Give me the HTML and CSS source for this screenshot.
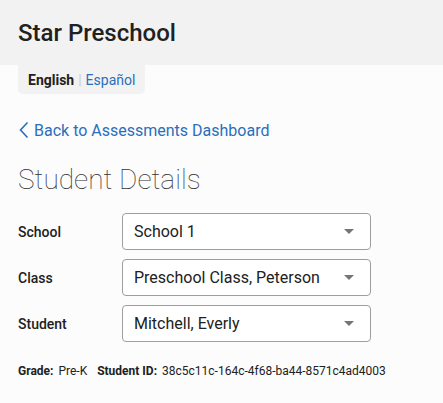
FILE: index.html
```html
<!DOCTYPE html>
<html lang="en">
<head>
<meta charset="utf-8">
<title>Star Preschool</title>
<link rel="stylesheet" href="styles.css">
</head>
<body>
<header class="header">
  <h1 class="title">Star Preschool</h1>
</header>
<div class="lang-wrap">
  <div class="lang">
    <span class="lang-active">English</span><span class="lang-sep">|</span><a class="lang-link" href="#">Español</a>
  </div>
</div>
<main class="main">
  <a class="back" href="#">
    <svg class="chev" width="12" height="18" viewBox="0 0 12 18"><path d="M9.5 1.5 L2.5 9 L9.5 16.5" fill="none" stroke="#2a6ebb" stroke-width="1.6"/></svg>
    <span>Back to Assessments Dashboard</span>
  </a>
  <h2 class="heading">Student Details</h2>
  <div class="form">
    <div class="row">
      <label class="label">School</label>
      <div class="select"><span>School 1</span><span class="arrow"></span></div>
    </div>
    <div class="row">
      <label class="label">Class</label>
      <div class="select"><span>Preschool Class, Peterson</span><span class="arrow"></span></div>
    </div>
    <div class="row">
      <label class="label">Student</label>
      <div class="select"><span>Mitchell, Everly</span><span class="arrow"></span></div>
    </div>
  </div>
  <div class="meta">
    <b class="meta-key">Grade:</b><span class="meta-val">Pre-K</span>
    <b class="meta-key">Student ID:</b><span class="meta-val">38c5c11c-164c-4f68-ba44-8571c4ad4003</span>
  </div>
</main>
</body>
</html>
```
FILE: styles.css
```css
html, body {
  margin: 0;
  padding: 0;
}
body {
  background: #fcfcfc;
  font-family: Roboto, "Liberation Sans", sans-serif;
  color: #212121;
}
.header {
  background: #f2f2f2;
  height: 65px;
  display: flex;
  align-items: center;
  padding: 0 18px;
}
.title {
  margin: 0;
  font-size: 24px;
  font-weight: 500;
  color: #212121;
}
.lang-wrap {
  padding: 0 18px;
  display: flex;
}
.lang {
  background: #f2f2f2;
  border-radius: 0 0 5px 5px;
  height: 29px;
  padding: 0 10px;
  display: flex;
  align-items: center;
  font-size: 14px;
}
.lang-active {
  font-weight: 700;
  color: #212121;
}
.lang-sep {
  color: #c8d0da;
  margin: 0 4px;
}
.lang-link {
  color: #2a6ebb;
  text-decoration: none;
}
.main {
  padding: 0 18px;
}
.back {
  display: flex;
  align-items: center;
  gap: 4px;
  margin-top: 26px;
  color: #2a6ebb;
  text-decoration: none;
  font-size: 16px;
  height: 20px;
}
.chev {
  display: block;
}
.heading {
  margin: 23px 0 0 0;
  font-family: Roboto, "Liberation Sans", sans-serif;
  font-size: 28px;
  font-weight: 100;
  color: #333;
  line-height: 34px;
}
.form {
  margin-top: 16px;
  display: flex;
  flex-direction: column;
  gap: 9px;
}
.row {
  display: flex;
  align-items: center;
}
.label {
  width: 104px;
  font-size: 14px;
  font-weight: 500;
  color: #212121;
}
.select {
  width: 249px;
  height: 37px;
  box-sizing: border-box;
  border: 1px solid #9e9e9e;
  border-radius: 4px;
  background: #fff;
  display: flex;
  align-items: center;
  justify-content: space-between;
  padding: 0 16px 0 11px;
  font-size: 16px;
  color: #212121;
}
.arrow {
  width: 0;
  height: 0;
  border-left: 5px solid transparent;
  border-right: 5px solid transparent;
  border-top: 5px solid #757575;
}
.meta {
  margin-top: 22px;
  font-size: 12px;
  display: flex;
  align-items: baseline;
}
.meta-key {
  font-weight: 700;
  margin-right: 5px;
}
.meta-val {
  margin-right: 10px;
}
```
